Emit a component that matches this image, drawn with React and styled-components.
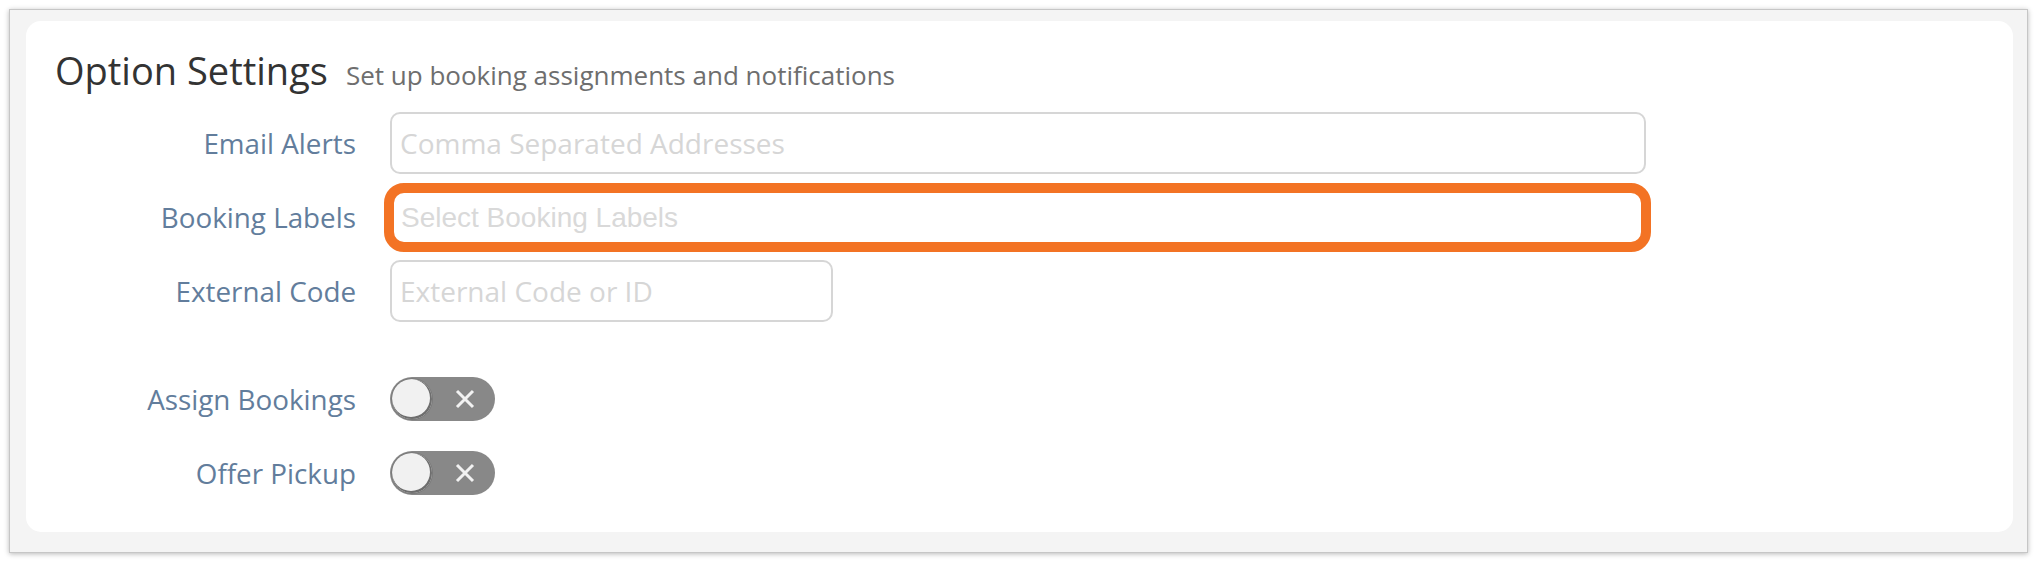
import React from "react";
import styled, { createGlobalStyle } from "styled-components";

const GlobalStyle = createGlobalStyle`
  html, body {
    margin: 0;
    padding: 0;
    background: #ffffff;
    font-family: "Open Sans", "Noto Sans", sans-serif;
  }
`;

const Page = styled.div`
  padding: 9px 10px 10px 9px;
`;

const Frame = styled.div`
  background-color: #f4f4f4;
  border: 1px solid #c6c6c6;
  box-shadow: 0 1px 5px rgba(0, 0, 0, 0.28);
  padding: 11px 14px 20px 16px;
`;

const Card = styled.section`
  background-color: #ffffff;
  border-radius: 15px;
  padding: 27px 28px 28px 29px;
`;

const Header = styled.div`
  display: flex;
  align-items: baseline;
  gap: 18px;
  margin-bottom: 19px;
`;

const Title = styled.h2`
  margin: 0;
  font-size: 38px;
  line-height: 44px;
  font-weight: 400;
  color: #333333;
`;

const Subtitle = styled.span`
  font-size: 26px;
  color: #6e6e6e;
`;

const Form = styled.div`
  display: grid;
  grid-template-columns: 301px auto;
  column-gap: 34px;
  row-gap: 12px;
  justify-content: start;
  align-items: center;
`;

const Label = styled.label`
  text-align: right;
  font-size: 27.8px;
  color: #627d9c;
  line-height: 62px;
`;

const Input = styled.input`
  box-sizing: border-box;
  width: ${(p) => p.$width}px;
  height: 62px;
  border: 2px solid #d6d6d6;
  border-radius: 10px;
  padding: 0 8px;
  font-family: "Open Sans", sans-serif;
  font-size: 28px;
  color: #333;
  background: #fff;
  outline: none;
  &::placeholder {
    color: #d6d6d6;
  }
`;

const Highlight = styled.div`
  box-sizing: border-box;
  height: 69px;
  margin: -3px -5px -4px -6px;
  border: 10px solid #f37324;
  border-radius: 20px;
  display: flex;
  align-items: center;
  background: #fff;
`;

const SelectPlaceholder = styled.span`
  padding-left: 7px;
  font-family: "Liberation Sans", Arial, sans-serif;
  font-size: 28px;
  color: #d9d9d9;
`;

const Spacer = styled.div`
  grid-column: 1 / -1;
  height: 22px;
`;

const Toggle = styled.div`
  box-sizing: border-box;
  width: 105px;
  height: 44px;
  border-radius: 22px;
  background-color: #888888;
  padding: 2px 20px 2px 2px;
  display: flex;
  align-items: center;
  justify-content: space-between;
`;

const Knob = styled.span`
  width: 40px;
  height: 40px;
  border-radius: 50%;
  background-color: #f1f1f1;
  box-shadow: -1px -1px 0 1px #6e6e6e inset, 0 0 0 1px #7a7a7a;
`;

const Cross = () => (
  <svg width="20" height="20" viewBox="0 0 20 20">
    <path d="M2 2 L18 18 M18 2 L2 18" stroke="#f2f2f2" strokeWidth="3" />
  </svg>
);

const App = () => {
  return (
    <Page>
      <GlobalStyle />
      <Frame>
        <Card>
          <Header>
            <Title>Option Settings</Title>
            <Subtitle>Set up booking assignments and notifications</Subtitle>
          </Header>
          <Form>
            <Label>Email Alerts</Label>
            <Input $width={1256} placeholder="Comma Separated Addresses" />
            <Label>Booking Labels</Label>
            <Highlight>
              <SelectPlaceholder>Select Booking Labels</SelectPlaceholder>
            </Highlight>
            <Label>External Code</Label>
            <Input $width={443} placeholder="External Code or ID" />
            <Spacer />
            <Label>Assign Bookings</Label>
            <Toggle>
              <Knob />
              <Cross />
            </Toggle>
            <Label>Offer Pickup</Label>
            <Toggle>
              <Knob />
              <Cross />
            </Toggle>
          </Form>
        </Card>
      </Frame>
    </Page>
  );
};

export default App;
